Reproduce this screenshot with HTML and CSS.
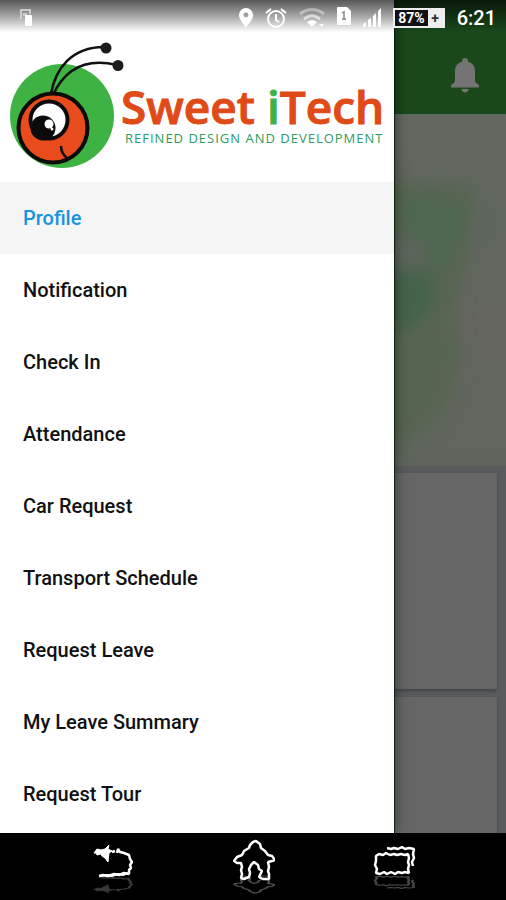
FILE: index.html
```html
<!DOCTYPE html>
<html lang="en">
  <head>
    <meta charset="UTF-8" />
    <meta name="viewport" content="width=device-width, initial-scale=1.0" />
    <title>Sweet iTech</title>
    <link rel="stylesheet" href="styles.css">
  </head>
  <body>
    <div class="screen">
      <!-- page behind the drawer -->
      <main class="page">
        <header class="appbar">
          <button class="bell" aria-label="Notifications">
            <svg width="28" height="35" viewBox="0 0 28 35">
              <path d="M14 0c-2 0-3 1.300-3 3v.8C6.500 5 4 8.500 4 13v9c0 2-1 3.500-4 5v2.500h28V27c-3-1.500-4-3-4-5v-9c0-4.500-2.500-8-7-9.200V3c0-1.700-1-3-3-3z" />
              <path d="M10.500 31h7c0 2-1.500 3.500-3.500 3.500S10.500 33 10.500 31z" />
            </svg>
          </button>
        </header>
        <div class="hero">
          <svg class="hero-art" viewBox="0 0 506 352" preserveAspectRatio="none">
            <defs>
              <filter id="soft" x="-30%" y="-30%" width="160%" height="160%">
                <feGaussianBlur stdDeviation="9" />
              </filter>
            </defs>
            <g filter="url(#soft)">
              <path fill="#56654f" d="M340 65L475 70L468 140L454 200L462 240L444 300L400 335L340 335z" />
              <path fill="#4f664f" d="M400 80L468 85L460 145L436 155L405 110z" />
              <path fill="#45644b" d="M340 160L432 155L434 190L412 215L340 225z" />
              <path fill="#5e6560" d="M385 122L412 127L430 149L385 150z" />
            </g>
          </svg>
        </div>
        <section class="cards">
          <div class="card"></div>
          <div class="card"></div>
        </section>
      </main>

      <aside class="drawer">
        <div class="logo">
          <svg class="logo-mark" width="116" height="128" viewBox="0 0 116 128">
            <circle cx="52" cy="74" r="52" fill="#3eb344" />
            <g fill="none" stroke="#111" stroke-width="2.600">
              <path d="M41 52C45 28 61 4 96 5" />
              <path d="M43 53C54 29 73 15 107 23" />
            </g>
            <circle cx="96" cy="6" r="5.500" fill="#1c1c1c" />
            <circle cx="108" cy="23.500" r="5.500" fill="#1c1c1c" />
            <circle cx="43" cy="86" r="34.500" fill="#e84c1c" stroke="#0b0b0b" stroke-width="4" />
            <circle cx="39" cy="78" r="18.500" fill="#fff" stroke="#0b0b0b" stroke-width="4" />
            <circle cx="33" cy="86" r="12.500" fill="#0b0b0b" />
            <circle cx="39" cy="82" r="4.500" fill="#fff" />
            <circle cx="42" cy="87" r="1.500" fill="#fff" />
            <path d="M51 104c0 5 2 9 6 12" fill="none" stroke="#0b0b0b" stroke-width="2.500" />
          </svg>
          <div class="logo-text">
            <div class="brand">Sweet <span class="brand-i">i</span>Tech</div>
            <div class="tagline">REFINED DESIGN AND DEVELOPMENT</div>
          </div>
        </div>
        <nav class="menu">
          <a class="active" href="#profile">Profile</a>
          <a href="#notification">Notification</a>
          <a href="#checkin">Check In</a>
          <a href="#attendance">Attendance</a>
          <a href="#car">Car Request</a>
          <a href="#transport">Transport Schedule</a>
          <a href="#leave">Request Leave</a>
          <a href="#summary">My Leave Summary</a>
          <a href="#tour">Request Tour</a>
        </nav>
      </aside>

      <div class="statusbar">
        <svg class="status-left" width="12" height="18" viewBox="0 0 12 18">
          <path d="M1 10V1h9v4" fill="none" stroke="#ddd" stroke-width="1.500" />
          <path d="M3 4h4v3H3z" fill="#ccc" />
          <rect x="5" y="6" width="7" height="11" rx="1" fill="#fff" />
        </svg>
        <svg width="14" height="20" viewBox="0 0 14 20">
          <path fill="#fff" fill-rule="evenodd" d="M7 0a7 7 0 0 1 7 7c0 4.500-4 8-7 13C4 15 0 11.500 0 7a7 7 0 0 1 7-7zm0 4.500a2.500 2.500 0 1 0 0 5 2.500 2.500 0 0 0 0-5z" />
        </svg>
        <svg width="22" height="20" viewBox="0 0 22 20">
          <g fill="none" stroke="#fff" stroke-width="2">
            <circle cx="11" cy="11" r="8" />
            <path d="M11 6v6l3 2M1 5l5-4M21 5l-5-4" />
          </g>
        </svg>
        <svg width="26" height="20" viewBox="0 0 26 20">
          <g fill="none" stroke="#fff" stroke-width="3">
            <path opacity=".4" d="M1 6c7-6 17-6 24 0" />
            <path opacity=".6" d="M5 11c5-4 11-4 16 0" />
          </g>
          <path fill="#fff" d="M8 14c3-2.500 7-2.500 10 0l-5 5zM20 16h5l-2.500 3z" />
        </svg>
        <svg width="14" height="22" viewBox="0 0 14 22">
          <path fill="#fff" d="M1 0h9l4 4v13a1 1 0 0 1-1 1H1a1 1 0 0 1-1-1V1a1 1 0 0 1 1-1z" />
          <path d="M5 6l2-1v7M5 12h4" fill="none" stroke="#999" stroke-width="1.800" />
        </svg>
        <svg width="18" height="20" viewBox="0 0 18 20">
          <path fill="#fff" d="M0 16l3-2v5H0zM5 12l3-2v9H5zM10 8l3-3v14h-3zM15 3l3-3v19h-3z" />
        </svg>
        <div class="battery">
          <span class="percent">87%</span>
          <span class="plus">+</span>
        </div>
        <span class="time">6:21</span>
      </div>
    </div>

    <footer class="navbar">
      <button aria-label="Back">
        <svg width="44" height="56" viewBox="0 0 44 56">
          <g id="back" fill="none" stroke="#fff" stroke-width="2.500" stroke-linejoin="bevel">
            <path fill="#fff" stroke-width="1" d="M5 14l3-4 4 1 4-1 4-4-1 4 4 2-3 2-1 9-3-4-3-2-1-2-4 1-1-2z" />
            <path d="M23 13l3-1M28 14l1-4 2 3 4 1 5 2 1 4 2 3-2 3 1 3-2 2v4l-5-1-5 2-5-1-6 2-5-1-4 1" />
            <path stroke-width="2" d="M12 37l6-1 5 1 6-2 5 1 5-2" />
          </g>
          <use href="#back" opacity=".22" transform="translate(0 57) scale(1 -.5)" />
        </svg>
      </button>
      <button aria-label="Home">
        <svg width="44" height="56" viewBox="0 0 44 56">
          <g id="home" fill="none" stroke="#fff" stroke-width="2.500" stroke-linejoin="bevel">
            <path d="M22 3l-3 3-1 3-5 3-2 4-5 2-3 4 3 2h4l1 4-1 3 1 4-1 4 3 1 5-2 1-4-1-4 2-4 3-3 4 3 1 4 3 2-3 6 4 2h6v-5l-1-3 1-4-1-5 4-1 3-1-3-4-4-1-3-4-4-3-1-4-4-3z" />
          </g>
          <use href="#home" opacity=".3" transform="translate(0 55) scale(1 -.45)" />
        </svg>
      </button>
      <button aria-label="Recent apps">
        <svg width="44" height="56" viewBox="0 0 44 56">
          <g id="recent" fill="none" stroke="#fff" stroke-width="2.500" stroke-linejoin="bevel">
            <path d="M3 17l3-2 4 1 3-2 4 2 4-1 3 1 4-1 4 1 3-1 1 4-1 4 1 3-1 4 1 4-4-1-3 1-4-1-3 2-4-2-4 2-3-2-4 2-4-1 1-4-2-4 1-4z" />
            <path d="M14 9l4 1 3-1 4 1 4-2 3 2 4-1 5 1-1 5 1 4-2 4 1 4" />
          </g>
          <use href="#recent" opacity=".28" transform="translate(0 53) scale(1 -.45)" />
        </svg>
      </button>
    </footer>
  </body>
</html>
```
FILE: styles.css
```css
* {
  box-sizing: border-box;
}

body {
  margin: 0;
  min-height: 100vh;
  display: flex;
  flex-direction: column;
  background-color: #000;
  font-family: Roboto, "Liberation Sans", sans-serif;
}

button {
  padding: 0;
  border: 0;
  background: none;
  cursor: pointer;
}

svg {
  display: block;
}

.screen {
  position: relative;
  flex: 1;
  display: flex;
  overflow: hidden;
}

/* page behind the drawer */
.page {
  flex: 1;
  display: flex;
  flex-direction: column;
  background-color: #595b5d;
}

.appbar {
  height: 114px;
  padding: 58px 27px 0;
  display: flex;
  justify-content: flex-end;
  align-items: flex-start;
  background-color: #1a481b;
}

.bell {
  fill: #747474;
}

.hero {
  height: 352px;
  background: linear-gradient(#656761, #5f665e 30%, #64655f 60%, #5f655d);
}

.hero-art {
  width: 100%;
  height: 100%;
}

.cards {
  flex: 1;
  display: flex;
  flex-direction: column;
  gap: 8px;
  padding: 7px 9px 0;
}

.card {
  height: 216px;
  background-color: #666;
  box-shadow: 0 2px 3px #444647;
}

.card:last-child {
  flex: 1;
  height: auto;
}

/* drawer */
.drawer {
  position: absolute;
  top: 0;
  bottom: 0;
  left: 0;
  width: 78%;
  background-color: #fff;
  border-right: 1px solid #0c240d;
  box-shadow: 0 0 12px rgba(0, 0, 0, 0.5);
  overflow: hidden;
}

.logo {
  height: 182px;
  padding: 42px 0 0 10px;
  display: flex;
  align-items: flex-start;
}

.logo-mark {
  flex: none;
  margin-right: -5px;
}

.logo-text {
  padding-top: 38px;
  white-space: nowrap;
}

.brand {
  font-family: "Open Sans", "Noto Sans", sans-serif;
  font-size: 46px;
  line-height: 52px;
  font-weight: 600;
  color: #e04a17;
  -webkit-text-stroke: 1px currentColor;
}

.brand-i {
  color: #3eb344;
}

.tagline {
  padding-left: 4px;
  font-family: "Open Sans", "Noto Sans", sans-serif;
  font-size: 13px;
  line-height: 13px;
  font-weight: 500;
  letter-spacing: 1px;
  color: #2a9d62;
}

.menu a {
  display: block;
  padding-left: 23px;
  font-size: 20px;
  line-height: 72px;
  font-weight: 500;
  color: #111;
  text-decoration: none;
}

.menu a.active {
  color: #1793e0;
  background-color: #f5f5f5;
}

/* phone status bar */
.statusbar {
  position: absolute;
  top: 0;
  left: 0;
  right: 0;
  height: 36px;
  padding: 0 10px 0 20px;
  display: flex;
  align-items: center;
  gap: 12px;
  background: linear-gradient(rgba(0, 0, 0, 0.66), rgba(0, 0, 0, 0.35) 45%, transparent 90%);
}

.status-left {
  margin-right: auto;
}

.battery {
  height: 20px;
  display: flex;
  border: 2px solid #eee;
  background-color: #111;
  color: #fff;
  font-size: 14px;
  line-height: 16px;
  font-weight: 700;
}

.percent {
  padding: 0 3px;
}

.plus {
  width: 15px;
  background-color: #eee;
  color: #333;
  text-align: center;
}

.time {
  font-size: 20px;
  line-height: 36px;
  font-weight: 500;
  color: #fff;
}

/* phone buttons */
.navbar {
  height: 67px;
  display: grid;
  grid-template-columns: repeat(3, 28%);
  justify-content: center;
  align-items: center;
  background-color: #000;
}

.navbar button {
  display: flex;
  justify-content: center;
}
```
